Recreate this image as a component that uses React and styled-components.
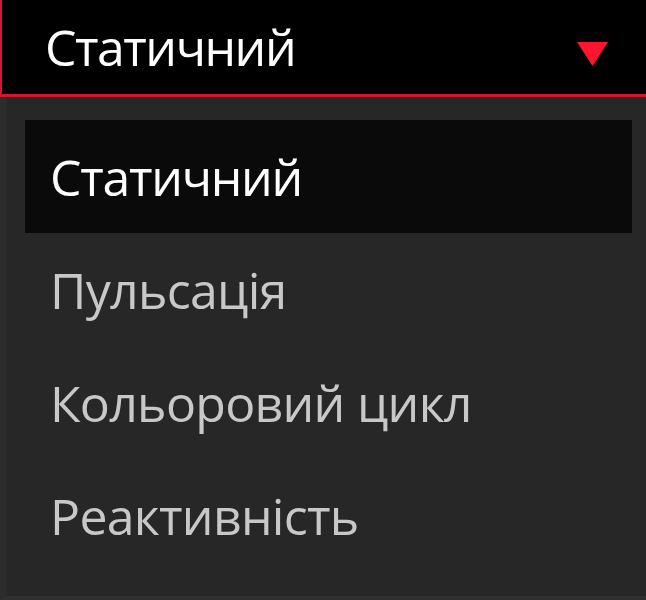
import styled, { createGlobalStyle } from "styled-components";

const GlobalStyle = createGlobalStyle`
  html, body {
    margin: 0;
    padding: 0;
    background: #262626;
    font-family: "Open Sans", "Noto Sans", sans-serif;
  }
`;

const options = ["Статичний", "Пульсація", "Кольоровий цикл", "Реактивність"];

const App = () => {
  const selected = 0;
  return (
    <>
      <GlobalStyle />
      <Select>
        <Header>
          <span>{options[selected]}</span>
          <Arrow viewBox="0 0 31 24">
            <polygon points="0,0 31,0 15.5,24" fill="#ff1530" />
          </Arrow>
        </Header>
        <Menu>
          {options.map((opt, i) => (
            <Item key={opt} active={i === selected}>
              {opt}
            </Item>
          ))}
        </Menu>
      </Select>
    </>
  );
};

export default App;

const Select = styled.div`
  width: 646px;
  height: 600px;
  display: flex;
  flex-direction: column;
  overflow: hidden;
`;

const Header = styled.div`
  height: 97px;
  box-sizing: border-box;
  background: #000;
  border-left: 2px solid #d8142a;
  border-bottom: 3px solid #d8142a;
  display: flex;
  align-items: center;
  justify-content: space-between;
  padding: 0 38px 0 43px;
  color: #fff;
  font-size: 50px;
  letter-spacing: -1.5px;
`;

const Arrow = styled.svg`
  width: 31px;
  height: 24px;
  margin-top: 14px;
`;

const Menu = styled.div`
  flex: 1;
  background: #272727;
  border-left: 6px solid #2c2c2c;
  border-bottom: 4px solid #303030;
  display: flex;
  flex-direction: column;
  padding: 23px 14px 0 19px;
`;

const Item = styled.div`
  height: 113px;
  flex-shrink: 0;
  display: flex;
  align-items: center;
  padding-left: 25px;
  font-size: 50px;
  letter-spacing: ${(p) => (p.active ? "-1.3px" : "-0.7px")};
  color: ${(p) => (p.active ? "#ffffff" : "#c8c8c8")};
  background: ${(p) => (p.active ? "#0a0a0a" : "transparent")};
`;
